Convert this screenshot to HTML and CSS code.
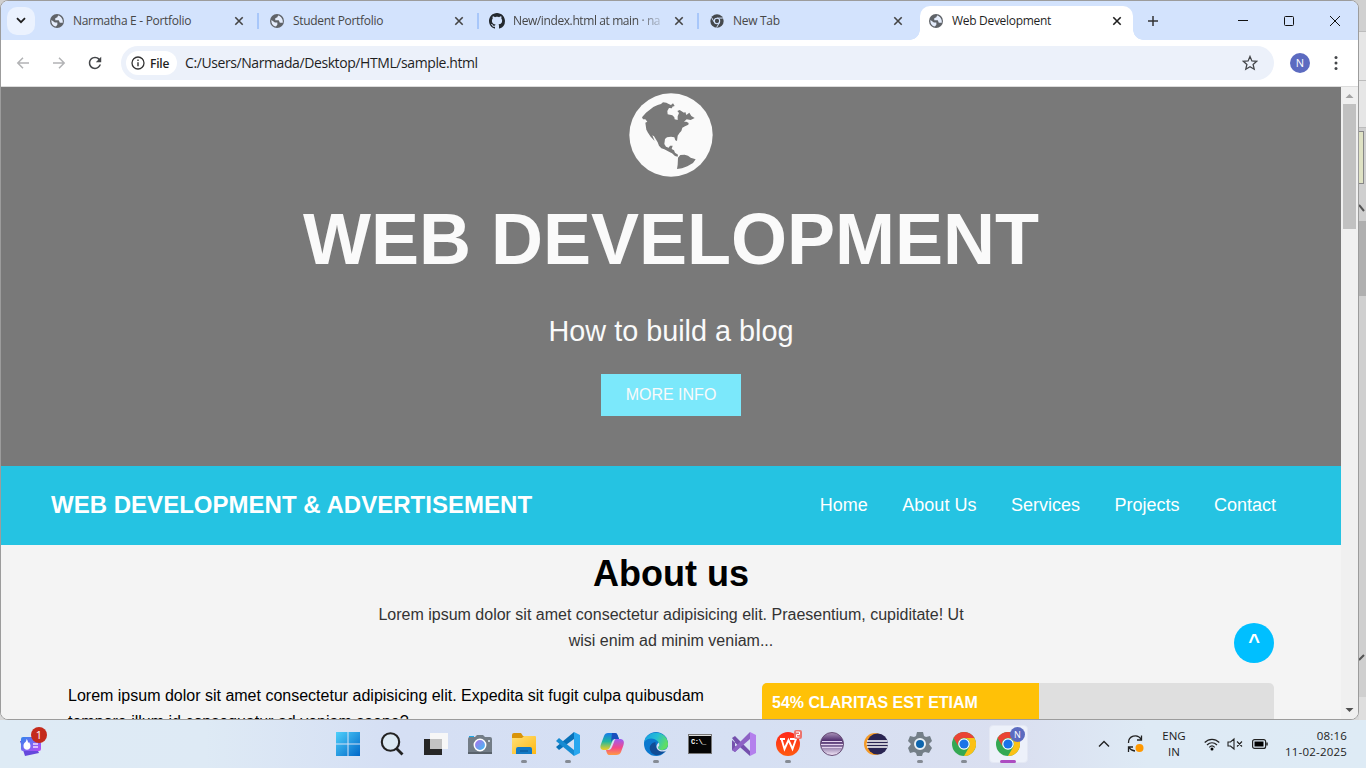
FILE: index.html
```html
<!DOCTYPE html>
<html lang="en">
<head>
<meta charset="utf-8">
<title>Web Development</title>
<link rel="stylesheet" href="styles.css">
</head>
<body>
<svg class="defs" aria-hidden="true">
  <defs>
    <symbol id="globe" viewBox="2 2 20 20"><circle cx="12" cy="12" r="10" fill="#5f6368"/><path d="M4 10.500L9 14h3.500v3.300l-2 2.500C6.500 19.500 3.500 15.500 4 10.500z M13.500 4l-1 2.500-3 1.500v3h5l1.500 3.500h4.200C21 9.500 18 5 13.500 4z" fill="#e4ecfb"/></symbol>
    <symbol id="x" viewBox="0 0 10 10"><path d="M1.300 1.300l7.400 7.400M8.700 1.300L1.300 8.700" stroke="currentColor" stroke-width="1.600" fill="none"/></symbol>
    <symbol id="chrome" viewBox="0 0 24 24"><circle cx="12" cy="12" r="12" fill="#34a853"/><path d="M1.600 6A12 12 0 0 1 22.400 6H12a6 6 0 0 0-5.200 9z" fill="#ea4335"/><path d="M22.400 6A12 12 0 0 1 12 24l5.200-9A6 6 0 0 0 12 6z" fill="#fbc116"/><circle cx="12" cy="12" r="5.800" fill="#fff"/><circle cx="12" cy="12" r="4.600" fill="#1a73e8"/></symbol>
    <linearGradient id="win" x2="1" y2="1"><stop stop-color="#4fd0fb"/><stop offset="1" stop-color="#0067c8"/></linearGradient>
    <linearGradient id="folder" x2="1" y2="1"><stop stop-color="#ffe078"/><stop offset="1" stop-color="#ffb812"/></linearGradient>
    <linearGradient id="lens" x2="1" y2="1"><stop stop-color="#b669ec"/><stop offset="1" stop-color="#35c6f2"/></linearGradient>
    <linearGradient id="copA" x2="0" y2="1"><stop stop-color="#177be9"/><stop offset=".5" stop-color="#20b7a0"/><stop offset="1" stop-color="#f3ce20"/></linearGradient>
    <linearGradient id="copB" x2="0" y2="1"><stop stop-color="#9b5cf5"/><stop offset=".55" stop-color="#f44988"/><stop offset="1" stop-color="#ff9b42"/></linearGradient>
    <linearGradient id="edgeA" x2="1" y2=".4"><stop stop-color="#169be5"/><stop offset=".55" stop-color="#25bfd4"/><stop offset="1" stop-color="#5fdd65"/></linearGradient>
    <linearGradient id="wid" x2="1" y2="1"><stop stop-color="#3186ee"/><stop offset="1" stop-color="#b94bf5"/></linearGradient>
    <linearGradient id="ecl" x2="0" y2="1"><stop stop-color="#ab94bb"/><stop offset=".35" stop-color="#50306f"/><stop offset=".6" stop-color="#8871a0"/><stop offset="1" stop-color="#f5eafb"/></linearGradient>
    <linearGradient id="wps" x2="0" y2="1"><stop stop-color="#ff281b"/><stop offset="1" stop-color="#ff5a10"/></linearGradient>
  </defs>
</svg>
<div class="screen">
  <div class="upper">
    <main class="window">
      <header class="tabs">
        <button class="tab-search"><svg width="10" height="7" viewBox="0 0 10 7"><path d="M1 1.200l4 4 4-4" fill="none" stroke="#1f1f1f" stroke-width="1.800"/></svg></button>
        <div class="tab"><svg class="fav"><use href="#globe"/></svg><span class="tab-title">Narmatha E - Portfolio</span><svg class="close"><use href="#x"/></svg></div>
        <div class="tab"><svg class="fav"><use href="#globe"/></svg><span class="tab-title">Student Portfolio</span><svg class="close"><use href="#x"/></svg></div>
        <div class="tab"><svg class="fav gh" viewBox="0 0 16 16"><path fill="#24292f" d="M8 0C3.58 0 0 3.58 0 8c0 3.54 2.29 6.53 5.47 7.59.4.07.55-.17.55-.38 0-.19-.01-.82-.01-1.49-2.01.37-2.53-.49-2.69-.94-.09-.23-.48-.94-.82-1.13-.28-.15-.68-.52-.01-.53.63-.01 1.08.58 1.23.82.72 1.21 1.87.87 2.33.66.07-.52.28-.87.51-1.07-1.78-.2-3.64-.89-3.64-3.95 0-.87.31-1.59.82-2.15-.08-.2-.36-1.02.08-2.12 0 0 .67-.21 2.2.82.64-.18 1.32-.27 2-.27s1.36.09 2 .27c1.53-1.04 2.2-.82 2.2-.82.44 1.1.16 1.92.08 2.12.51.56.82 1.27.82 2.15 0 3.07-1.87 3.75-3.65 3.95.29.25.54.73.54 1.48 0 1.07-.01 1.93-.01 2.2 0 .21.15.46.55.38A8.01 8.01 0 0 0 16 8c0-4.42-3.58-8-8-8z"/></svg><span class="tab-title fade">New/index.html at main · na</span><svg class="close"><use href="#x"/></svg></div>
        <div class="tab last"><svg class="fav" viewBox="0 0 24 24"><circle cx="12" cy="12" r="11.500" fill="#45494d"/><path d="M12 7h10M7.700 14.500L2.500 5.800M16.300 14.500l-5 8.700" stroke="#d3e3fd" stroke-width="1.700"/><circle cx="12" cy="12" r="4.600" fill="#45494d" stroke="#d3e3fd" stroke-width="1.900"/></svg><span class="tab-title">New Tab</span><svg class="close"><use href="#x"/></svg></div>
        <div class="tab active"><svg class="fav"><use href="#globe"/></svg><span class="tab-title">Web Development</span><svg class="close"><use href="#x"/></svg></div>
        <svg class="plus" width="12" height="12"><path d="M6 1v10M1 6h10" stroke="#333" stroke-width="1.500"/></svg>
        <div class="controls">
          <svg width="46" height="38"><path d="M18 18.500h10" stroke="#111"/></svg>
          <svg width="46" height="38"><rect x="18.500" y="14.500" width="9" height="9" rx="1" fill="none" stroke="#111"/></svg>
          <svg width="46" height="38"><path d="M18 14l10 10M28 14l-10 10" stroke="#111"/></svg>
        </div>
      </header>
      <div class="toolbar">
        <svg class="tool" viewBox="0 0 14 14"><path d="M13 7H2M7 1.800L1.800 7 7 12.200" fill="none" stroke="#b2b3b5" stroke-width="1.500"/></svg>
        <svg class="tool" viewBox="0 0 14 14"><path d="M1 7h11M7 1.800L12.200 7 7 12.200" fill="none" stroke="#b2b3b5" stroke-width="1.500"/></svg>
        <svg class="tool" viewBox="3 3 18 18"><path fill="#45474a" d="M17.65 6.35C16.2 4.9 14.21 4 12 4c-4.42 0-7.99 3.58-7.99 8s3.57 8 7.99 8c3.73 0 6.84-2.55 7.73-6h-2.08c-.82 2.33-3.04 4-5.650 4-3.310 0-6-2.690-6-6s2.690-6 6-6c1.660 0 3.140.690 4.220 1.780L13 11h7V4l-2.350 2.350z"/></svg>
        <div class="omnibox">
          <span class="pill"><svg width="14" height="14"><circle cx="7" cy="7" r="6" fill="none" stroke="#333" stroke-width="1.300"/><path d="M7 6.200v4M7 3.600v1.400" stroke="#333" stroke-width="1.400"/></svg><b>File</b></span>
          <span class="url">C:/Users/Narmada/Desktop/HTML/sample.html</span>
          <svg class="star" width="16" height="16" viewBox="0 0 16 16"><path d="M8 1.500l1.900 4.400 4.800.4-3.600 3.200 1.100 4.700L8 11.700l-4.200 2.500 1.100-4.700L1.300 6.300l4.800-.4z" fill="none" stroke="#45474a" stroke-width="1.300"/></svg>
        </div>
        <span class="avatar">N</span>
        <svg class="dots" width="4" height="16" fill="#45474a"><circle cx="2" cy="2.500" r="1.500"/><circle cx="2" cy="8" r="1.500"/><circle cx="2" cy="13.500" r="1.500"/></svg>
      </div>
      <div class="viewport">
        <div class="page">
          <section class="hero">
            <svg class="world" width="84" height="84" viewBox="57 22 252 252"><circle cx="183" cy="148" r="125" fill="#fafafa"/><path fill="#797979" d="M96 95L108 81 130 64 143 58 153 55 159 50 169 51 176 55 183 58 189 53 194 61 187 63 186 68 177 67 172 76 173 86 187 89 193 95 194 101 203 103 203 92 207 82 202 76 209 73 222 81 226 79 229 88 238 81 244 91 254 97 242 103 230 101 222 108 229 108 236 112 235 117 225 122 217 126 214 136 209 141 203 150 201 166 196 164 193 155 183 153 171 155 165 160 163 175 168 183 176 186 180 180 188 180 185 190 192 194 195 201 204 207 203 213 195 211 186 203 177 198 163 191 154 188 147 180 143 170 132 152 127 149 134 166 139 171 122 153 114 141 109 132 106 111 112 108 106 101 99 101z"/><path fill="#797979" d="M204 216l7-8 13-1 10 3 8 6 15 5-8 11-17 10-16 6-15 2 2-13z"/></svg>
            <h1>WEB DEVELOPMENT</h1>
            <p>How to build a blog</p>
            <a class="more">MORE INFO</a>
          </section>
          <nav class="nav">
            <strong>WEB DEVELOPMENT &amp; ADVERTISEMENT</strong>
            <div class="links"><a>Home</a><a>About Us</a><a>Services</a><a>Projects</a><a>Contact</a></div>
          </nav>
          <section class="about">
            <h2>About us</h2>
            <p class="lead">Lorem ipsum dolor sit amet consectetur adipisicing elit. Praesentium, cupiditate! Ut<br>wisi enim ad minim veniam...</p>
            <div class="cols">
              <p class="copy">Lorem ipsum dolor sit amet consectetur adipisicing elit. Expedita sit fugit culpa quibusdam<br>tempore illum id consequatur ad veniam saepe?</p>
              <div class="bar"><div class="fill" style="width:54.1%">54% CLARITAS EST ETIAM</div></div>
            </div>
          </section>
          <a class="to-top">^</a>
        </div>
        <div class="scroll">
          <svg width="17" height="17"><path d="M4.500 11h8l-4-4z" fill="#a3a3a3"/></svg>
          <div class="thumb"></div>
          <svg class="down" width="17" height="17"><path d="M4.500 6h8l-4 4z" fill="#505050"/></svg>
        </div>
      </div>
    </main>
    <aside class="behind">
      <svg width="7" height="720"><rect width="7" height="720" fill="#cfcfcf"/><rect width="7" height="31" fill="#d0d0d0"/><path d="M0 31.500h7M0 80.500h7M0 127.500h7" stroke="#bcbcbc"/><path d="M0 32h7v48H0zM0 81h7v46H0z" fill="#e6e6e6"/><rect x="-2" y="131.500" width="6.500" height="52" fill="#dfe2c4" stroke="#888"/><path d="M0 205l5 6M0 660l5-5" stroke="#555" stroke-width="2"/><rect y="221" width="7" height="75" fill="#afafaf"/><rect y="697" width="7" height="23" fill="#dedede"/></svg>
    </aside>
  </div>
  <footer class="taskbar">
    <div class="widget"><svg width="28" height="32" viewBox="0 0 28 32"><path d="M1 13l5 15 14-3-6-13z" fill="#6548dc"/><rect x="2" y="9" width="20" height="14" rx="2" fill="url(#wid)"/><path d="M7.500 11c0 4-3 3-3 7 0 5 7 5 7 0 0-2-1-3-1.500-4l-1 1c0-2-.5-3-1.500-4z" fill="#fff"/><path d="M14 16h5M14 19h5" stroke="#f2dfff" stroke-width="1.500"/></svg><span>1</span></div>
    <div class="apps">
      <i><svg viewBox="0 0 24 24"><path d="M0 0h11.500v11.500H0zM12.500 0H24v11.500H12.500zM0 12.500h11.500V24H0zM12.500 12.500H24V24H12.500z" fill="url(#win)"/></svg></i>
      <i><svg viewBox="0 0 24 24"><circle cx="10.500" cy="10" r="8.700" fill="#dce9f4" stroke="#222" stroke-width="2.100"/><path d="M16.500 16.500l6 6" stroke="#222" stroke-width="2.800"/></svg></i>
      <i><svg viewBox="0 0 24 24"><rect x="0" y="7" width="18" height="16" fill="#272727"/><rect x="6" y="1" width="18" height="16" fill="#f7f7f7"/><rect x="6" y="7" width="12" height="10" fill="#c2c2c2"/></svg></i>
      <i><svg viewBox="0 0 24 24"><path d="M1 4h5v4H1z" fill="#1aa9e8"/><path d="M7 5l2-2h6l2 2h5q2 0 2 2v15H0V7q0-2 2-2z" fill="#737d87"/><path d="M0 20h24v2H0z" fill="#59626b"/><circle cx="12" cy="13" r="5.700" fill="url(#lens)" stroke="#fff" stroke-width="1.500"/><rect x="20" y="8" width="2" height="2" fill="#c8d4dd"/></svg></i>
      <i class="run"><svg viewBox="0 0 24 24"><path d="M0 3q0-2 2-2h7l2 3h10v8H0z" fill="#d99409"/><path d="M0 6h10l2-2h11q1 0 1 1v17H0z" fill="url(#folder)"/><path d="M4 22v-5q0-2 2-2h12q2 0 2 2v5z" fill="#1279c4"/><path d="M8 19h8" stroke="#075391"/></svg></i>
      <i class="run"><svg viewBox="0 0 24 24"><path d="M18 0v7L3 18l-3-3z" fill="#0871b8"/><path d="M3 6l15 12v6L0 9z" fill="#168bd2"/><path d="M18 0l6 3v18l-6 3z" fill="#28a7ef"/></svg></i>
      <i><svg viewBox="0 0 24 24"><path d="M8 1h7q2 0 2.500 2L19 7h-4q-2 0-3 3l-2 5q-1 3-4 3H3q-4-1-2-6l3-8q1-3 4-3z" fill="url(#copA)"/><path d="M12 1h3q2 0 2.500 2L19 7h-5q-2 0-3 3z" fill="#194fbd"/><path d="M15.500 7H21q4 1 2.500 6l-2.500 7q-1 3-5 3H9q-2 0-3-5h3q2 0 3-3l2-5q.5-2 1.500-3z" fill="url(#copB)"/></svg></i>
      <i class="run"><svg viewBox="0 0 24 24"><circle cx="12" cy="12" r="12" fill="#0b78cf"/><path d="M.2 10C2-2 22-3 24 11c.5 5-3 7-6 7-4 0-5-2-3.500-3.500C18 10 7 2 .2 10z" fill="url(#edgeA)"/><path d="M11.500 10C7 11 5 14 6 18c2 7 12 7 17-1-4 3-12 1-11.500-7z" fill="#114c95"/><path d="M14.500 14.500C13 16 15 18 18 18.300c2.500 0 4.500-1 6-3V18l-2 1c-5 1.800-10-1-9.500-5 .3-1.500 1.500-2.500 2-3.500 1 1.500 1 3 0 4z" fill="#d6e2f3"/></svg></i>
      <i><svg viewBox="0 0 24 24"><rect x=".5" y="2.500" width="23" height="19" fill="#050505" stroke="#777"/><path d="M1 3.500h22" stroke="#ddd"/><text x="3" y="12" class="cmd">C:\_</text></svg></i>
      <i><svg viewBox="0 0 24 24"><path d="M0 6l3-2L18 19v5L0 8z M0 6v12l3 2 4-4-4-2V10z" fill="#7450ad"/><path d="M18 0v7L3 20l-3-2z" fill="#8d62c5"/><path d="M18 0l6 3v18l-6 3z" fill="#b480ed"/></svg></i>
      <i class="run"><svg viewBox="0 0 24 24"><circle cx="12" cy="12" r="12" fill="url(#wps)"/><path d="M4 7h5M5.500 7l3 10 4-9 4 9L20 7h-6" fill="none" stroke="#fff" stroke-width="1.900"/><rect x="18" y="-2" width="8" height="9" rx="2" fill="#ec746e"/><path d="M20 0h3.500v2.500H20.500V5h3" fill="none" stroke="#fff"/></svg></i>
      <i><svg viewBox="0 0 24 24"><circle cx="12" cy="12" r="11.500" fill="url(#ecl)" stroke="#695078"/><path d="M2 9.500h20M1 12.500h22M2 15.500h20" stroke="#e2d2ec" stroke-width="1.200"/></svg></i>
      <i><svg viewBox="0 0 24 24"><circle cx="11" cy="12" r="11" fill="#f39a28"/><circle cx="13.500" cy="12" r="10.500" fill="#292452"/><path d="M3 9h20.500M2.500 12H24M3 15h20.500" stroke="#fff" stroke-width="1.500"/></svg></i>
      <i class="run"><svg viewBox="0 0 24 24"><path d="M9 0h6l1 4 2 1 4-1 2 5-3 3 3 4-3 5-4-1-2 1-1 3H9l-1-3-2-1-4 1-2-5 3-4-3-3 2-5 4 1 2-1z" fill="#747f88"/><circle cx="12" cy="12" r="5" fill="#0d65ad" stroke="#eaf1f6" stroke-width="2"/></svg></i>
      <i class="run"><svg><use href="#chrome"/></svg></i>
      <i class="run current"><svg><use href="#chrome"/></svg><span class="badge">N</span></i>
    </div>
    <div class="tray">
      <svg class="up" width="12" height="8"><path d="M1 6.500l5-5 5 5" fill="none" stroke="#222" stroke-width="1.400"/></svg>
      <svg class="sync" width="18" height="18"><path d="M1.500 8A6.800 6.800 0 0 1 14 4M14.500 0.500V5H10M6 12H1.500v5M2 12.500c1.500 2.500 3.500 3.300 6 3.500" fill="none" stroke="#222" stroke-width="1.300"/><circle cx="12.500" cy="13" r="4" fill="#ff9800"/></svg>
      <div class="lang">ENG<br>IN</div>
      <svg class="wifi" width="16" height="13"><path d="M.7 4.500c4.300-4.300 10.300-4.300 14.600 0M3 7c3-3 7-3 10 0M5.300 9.300c1.700-1.700 3.700-1.700 5.400 0" fill="none" stroke="#222" stroke-width="1.200"/><circle cx="8" cy="11" r="1.500"/></svg>
      <svg class="sound" width="17" height="12"><path d="M1 4h2.500L7 1v10L3.500 8H1zM10 3.500l5 5M15 3.500l-5 5" fill="none" stroke="#222" stroke-width="1.100"/></svg>
      <svg class="battery" width="16" height="10"><rect x=".6" y=".6" width="13" height="8.800" rx="2" fill="none" stroke="#222" stroke-width="1.200"/><rect x="2.500" y="2.500" width="9" height="5"/><path d="M15 3.500v3" stroke="#222" stroke-width="1.500"/></svg>
      <div class="clock">08:16<br>11-02-2025</div>
    </div>
  </footer>
</div>
</body>
</html>
```

FILE: styles.css
```css
* { box-sizing: border-box; }
body { margin: 0; font-family: "Open Sans", "Noto Sans", sans-serif; font-size: 12px; color: #1f1f1f; }
.defs { position: absolute; width: 0; height: 0; }
svg { display: block; flex: none; overflow: visible; }
.screen { width: 1366px; height: 768px; overflow: hidden; display: flex; flex-direction: column; }
.upper { height: 720px; display: flex; background: linear-gradient(#cfcfcf, #d8d8d8); }
.window { width: 1359px; height: 720px; border: 1px solid #9c9c9c; border-radius: 8px; overflow: hidden; display: flex; flex-direction: column; background: #fff; }
.behind { width: 7px; overflow: hidden; }

.tabs { height: 39px; background: #d3e3fd; display: flex; align-items: center; flex: none; }
.tab-search { margin: 0 4px 0 6px; width: 28px; height: 28px; border: 0; border-radius: 10px; background: #ebf2fe; display: flex; align-items: center; justify-content: center; padding: 0; }
.tab { width: 220px; height: 16px; padding-left: 11px; padding-right: 13px; border-right: 2px solid #a8c7fa; display: flex; align-items: center; color: #474747; }
.tab.last { width: 221px; padding-right: 15px; border-color: transparent; }
.fav { width: 14px; height: 14px; margin-right: 9px; }
.fav.gh { width: 16px; height: 16px; margin: 0 8px 0 -1px; }
.tab-title { flex: 1; white-space: nowrap; line-height: 20px; letter-spacing: -.3px; }
.fade { flex: 0 0 150px; margin-right: auto; letter-spacing: -.4px; -webkit-mask-image: linear-gradient(90deg, #000 82%, transparent 103%); mask-image: linear-gradient(90deg, #000 82%, transparent 103%); }
.close { width: 10px; height: 10px; color: #444; }
.tab.active { width: 213px; height: 34px; align-self: flex-end; background: #fff; border: 0; border-radius: 10px 10px 0 0; padding: 0 11px 4px 9px; color: #1f1f1f; position: relative; }
.tab.active::before, .tab.active::after { content: ""; position: absolute; bottom: 0; width: 10px; height: 10px; }
.tab.active::before { left: -10px; background: radial-gradient(circle at 0 0, transparent 9.500px, #fff 10px); }
.tab.active::after { right: -10px; background: radial-gradient(circle at 100% 0, transparent 9.500px, #fff 10px); }
.active .close { color: #1f1f1f; }
.plus { margin-left: 14px; }
.controls { margin-left: auto; display: flex; }

.toolbar { height: 47px; flex: none; display: flex; align-items: center; padding-left: 15px; background: #fff; border-bottom: 1px solid #dcdcdc; }
.tool { width: 14px; height: 14px; margin-right: 22px; }
.omnibox { width: 1153px; height: 34px; margin-left: -3px; border-radius: 17px; background: #ecf1fa; display: flex; align-items: center; padding: 0 16px 0 5px; }
.pill { width: 51px; height: 24px; border-radius: 12px; background: #fff; display: flex; align-items: center; padding-left: 5px; gap: 5px; }
.pill b { font-weight: 600; letter-spacing: -.2px; }
.url { font-size: 14px; margin-left: 8px; letter-spacing: -.41px; padding-bottom: 1px; }
.star { margin-left: auto; }
.avatar { width: 20px; height: 20px; border-radius: 50%; background: #5c6bc0; color: #fff; font-size: 11px; line-height: 20px; text-align: center; margin-left: 16px; }
.dots { margin-left: 24px; }

.viewport { flex: 1; min-height: 0; display: flex; }
.page { width: 1340px; height: 632px; overflow: hidden; background: #f4f4f4; font-family: "Liberation Sans", Arial, sans-serif; position: relative; }
.hero { height: 379px; background: #797979; color: #fafafa; display: flex; flex-direction: column; align-items: center; padding-top: 6px; }
.hero h1 { margin: 20px 0 0; font-size: 72px; line-height: 84px; }
.hero p { margin: 31px 0 0; font-size: 28.800px; line-height: 38px; }
.more { margin-top: 24px; width: 140px; height: 42px; line-height: 42px; text-align: center; background: #7be8fb; font-size: 16px; }
.nav { height: 79px; background: #25c3e2; color: #fff; display: flex; align-items: center; justify-content: space-between; padding: 0 65px 0 50px; }
.nav strong { font-size: 24px; letter-spacing: .02px; padding-bottom: 2px; }
.links { display: flex; gap: 34.500px; font-size: 18px; }
.about { color: #000; }
.about h2 { margin: 0; padding-top: 8px; font-size: 36px; line-height: 42px; text-align: center; }
.lead { margin: 7px 0 0; font-size: 16px; line-height: 26px; text-align: center; color: #333; }
.cols { display: flex; padding: 29px 67px 0; justify-content: space-between; }
.copy { margin: 0; font-size: 16px; line-height: 26px; }
.bar { width: 512px; height: 40px; background: #dfdfdf; border-radius: 5px; overflow: hidden; }
.fill { height: 40px; padding-left: 10px; line-height: 39px; font-size: 16px; font-weight: bold; color: #fff; background: #ffc107; white-space: nowrap; }
.to-top { position: absolute; right: 67px; bottom: 56px; width: 40px; height: 40px; border-radius: 50%; background: #00bfff; color: #fff; font-size: 20px; font-weight: bold; line-height: 37px; text-align: center; }
.scroll { width: 17px; background: #f0f0f0; display: flex; flex-direction: column; }
.thumb { width: 13px; height: 125px; margin-left: 2px; background: #c1c1c1; }
.down { margin-top: auto; }

.taskbar { height: 48px; display: flex; background: linear-gradient(90deg, #deebf5 0, #deeaf5 15%, #d5dff4 29%, #d6e0f3 55%, #dadff0 74%, #deeaf5 84%, #deebf5 100%); }
.widget { width: 326px; flex: none; padding: 8px 0 0 19px; position: relative; }
.widget span { position: absolute; left: 31px; top: 7px; width: 16px; height: 16px; border-radius: 50%; background: #c42b1c; color: #fff; text-align: center; line-height: 16px; font-size: 11px; }
.apps { display: flex; width: 704px; flex: none; }
.apps i { width: 44px; height: 48px; display: flex; align-items: center; justify-content: center; position: relative; font-style: normal; }
.apps svg { width: 24px; height: 24px; }
.run::after { content: ""; position: absolute; bottom: 5px; width: 6px; height: 3px; border-radius: 2px; background: #858b94; }
.current::before { content: ""; position: absolute; inset: 5px 2px 5px 3px; background: #edf1fa; border-radius: 4px; border: 1px solid #e4e8f4; }
.current svg { position: relative; }
.current::after { width: 16px; background: #ac4cc1; }
.badge { position: absolute; left: 24px; top: 7px; width: 15px; height: 15px; border-radius: 50%; background: #5c6bc0; color: #fff; font-size: 9px; line-height: 15px; text-align: center; }
.cmd { font: bold 7px "Liberation Mono", monospace; fill: #fff; letter-spacing: -.5px; }
.tray { flex: 1; display: flex; align-items: center; padding-left: 68px; font-size: 11.500px; line-height: 16px; color: #1c1c1c; }
.sync { margin-left: 17px; }
.lang { width: 36px; text-align: center; margin-left: 11px; }
.wifi { margin-left: 12px; }
.sound { margin-left: 7px; }
.battery { margin-left: 8px; }
.clock { margin-left: auto; padding-right: 19px; text-align: right; white-space: nowrap; letter-spacing: .2px; }
```
